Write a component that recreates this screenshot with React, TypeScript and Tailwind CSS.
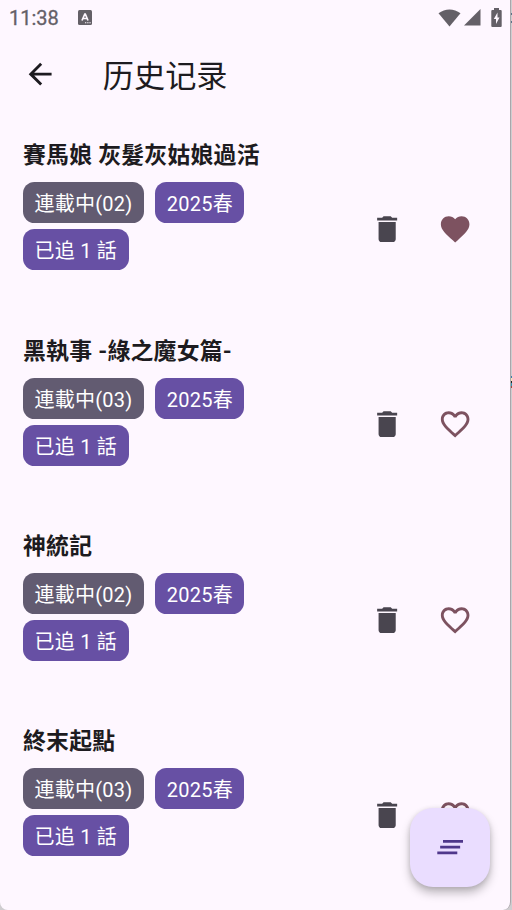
import React from 'react';
import { MdArrowBack, MdClearAll, MdDelete, MdFavorite, MdFavoriteBorder } from 'react-icons/md';

interface HistoryItem {
    title: string;
    status: string;
    season: string;
    progress: string;
    favorite: boolean;
}

const HISTORY: HistoryItem[] = [
    { title: '賽馬娘 灰髮灰姑娘過活', status: '連載中(02)', season: '2025春', progress: '已追 1 話', favorite: true },
    { title: '黑執事 -綠之魔女篇-', status: '連載中(03)', season: '2025春', progress: '已追 1 話', favorite: false },
    { title: '神統記', status: '連載中(02)', season: '2025春', progress: '已追 1 話', favorite: false },
    { title: '終末起點', status: '連載中(03)', season: '2025春', progress: '已追 1 話', favorite: false },
];

const StatusBar: React.FC = () => (
    <div className="flex h-[35px] shrink-0 items-center pl-[9px] pr-[8px] text-[#646067]">
        <span className="w-[51px] pt-[2px] text-[20px] leading-[33px] [-webkit-text-stroke:0.3px_#646067]">11:38</span>
        <svg className="ml-[18px] h-[15px] w-[14px]" viewBox="0 0 14 15">
            <rect width="14" height="15" rx="1.5" fill="currentColor" />
            <path d="M4 10.5 6.8 4h.5L10 10.5M5 8.5h4" fill="none" stroke="#fef7ff" strokeWidth="1.7" />
            <path d="M7 12.7h1.3m.9 0h1.3m.9 0h1.3" stroke="#fef7ff" strokeWidth="1.1" />
        </svg>
        <svg className="ml-auto h-[18px] w-[23px]" viewBox="0 0 23 18">
            <path d="M.5 4.3C7 -.8 16 -.8 22.5 4.3L11.5 17.5z" fill="currentColor" />
        </svg>
        <svg className="ml-[3px] h-[17px] w-[17px]" viewBox="0 0 17 17">
            <path d="M16.5 0v16.5H0z" fill="currentColor" />
        </svg>
        <svg className="ml-[10px] h-[19px] w-[11px]" viewBox="0 0 11 19">
            <path d="M3 0h5v2h1.7q1 0 1 1v15q0 1-1 1H1.3q-1 0-1-1V3q0-1 1-1H3z" fill="currentColor" />
            <path d="M6.5 4.5 2.8 11H5V16L8.5 9.5H6.5z" fill="#fef7ff" />
        </svg>
    </div>
);

const Chip: React.FC<{ className: string; children: React.ReactNode }> = ({ className, children }) => (
    <span className={`h-[41px] rounded-[11.4px] px-[11.4px] pt-[2px] text-[20px] leading-[41px] tracking-[0.26px] whitespace-nowrap text-white ${className}`}>
        {children}
    </span>
);

const HistoryRow: React.FC<{ item: HistoryItem }> = ({ item }) => (
    <li className="flex h-[195.4px] items-center pl-[23px] pr-[38px]">
        <div className="h-[133px] w-[300px]">
            <h2 className="mb-[11px] h-[34px] pt-[2px] text-[22.85px] leading-[34px] font-bold tracking-[0.24px] whitespace-nowrap text-[#1d1b20]">{item.title}</h2>
            <div className="flex w-[260px] flex-wrap gap-x-[11.4px] gap-y-[6px]">
                <Chip className="bg-[#625b71]">{item.status}</Chip>
                <Chip className="bg-[#6750a4]">{item.season}</Chip>
                <Chip className="bg-[#6750a4]">{item.progress}</Chip>
            </div>
        </div>
        <div className="ml-auto flex gap-[33.6px] pt-[51px]">
            <MdDelete className="size-[34.3px] text-[#49454f]" />
            {item.favorite ? (
                <MdFavorite className="size-[34.3px] text-[#7d5260]" />
            ) : (
                <MdFavoriteBorder className="size-[34.3px] text-[#7d5260]" />
            )}
        </div>
    </li>
);

// Sliver of the desktop that shows beside the emulator window
const DesktopEdge: React.FC = () => (
    <div className="flex w-px flex-col">
        <div className="mt-[13px] h-[2px] bg-[#5c7388]" />
        <div className="mt-[6px] h-[2px] bg-[#5c7388]" />
        <div className="mt-[353px] h-[2px] bg-[#3e7fa8]" />
        <div className="h-[3px] bg-[#f3e6b8]" />
        <div className="h-[2px] bg-[#222222]" />
        <div className="h-[3px] bg-[#3498b5]" />
        <div className="h-[2px] bg-[#a5443c]" />
    </div>
);

const App: React.FC = () => (
    <div className="flex h-[910px] w-[512px] overflow-hidden bg-[#cfcdd0] font-[Roboto,'Noto_Sans_CJK_SC',sans-serif]">
        <div className="relative flex h-[910px] w-[511px] flex-col overflow-hidden rounded-b-[8px] border-r border-[#aaa6ab] bg-[#fef7ff]">
            <StatusBar />
            <header className="flex h-[78px] shrink-0 items-center pl-[22.5px]">
                <MdArrowBack className="size-[34.3px] text-[#1d1b20]" />
                <h1 className="ml-[46px] pt-[7px] text-[31.2px] text-[#1d1b20]">历史记录</h1>
            </header>
            <ul className="-mt-[7px]">
                {HISTORY.map((item) => (
                    <HistoryRow key={item.title} item={item} />
                ))}
            </ul>
            <button className="absolute right-[20.5px] bottom-[23px] flex size-[79.5px] items-center justify-center rounded-[23px] bg-[#eaddff] shadow-[0_6px_10px_rgba(0,0,0,0.25),0_1px_5px_rgba(0,0,0,0.12)]">
                <MdClearAll className="size-[34.3px] text-[#4f378b]" />
            </button>
        </div>
        <DesktopEdge />
    </div>
);

export default App;
